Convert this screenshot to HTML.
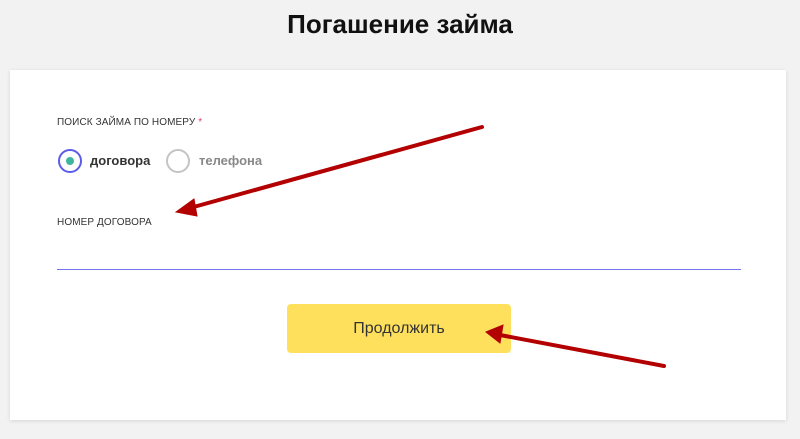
<!DOCTYPE html>
<html><head><meta charset="utf-8"><style>
body{margin:0;width:800px;height:439px;background:#f2f2f2;font-family:"Liberation Sans",sans-serif;position:relative;overflow:hidden}
h1{position:absolute;top:9px;left:0;width:800px;text-align:center;margin:0;font-size:26px;font-weight:bold;color:#111}
.card{position:absolute;left:10px;top:70px;width:776px;height:350px;background:#fff;box-shadow:0 1px 4px rgba(0,0,0,.12)}
.lbl{position:absolute;font-size:10px;color:#333;letter-spacing:.1px}
.r{position:absolute;width:24px;height:24px;border-radius:50%;box-sizing:border-box}
.t{position:absolute;font-size:13px;font-weight:bold}
.btn{position:absolute;left:277px;top:234px;width:224px;height:49px;background:#ffe05c;border-radius:4px;text-align:center;line-height:49px;font-size:16px;color:#333}
</style></head><body>
<h1>Погашение займа</h1>
<div class="card">
<div class="lbl" style="left:47px;top:47px">ПОИСК ЗАЙМА ПО НОМЕРУ <span style="color:#e5397a">*</span></div>
<div class="r" style="left:48px;top:79px;border:2px solid #5b5be8"><div style="position:absolute;left:6px;top:6px;width:8px;height:8px;border-radius:50%;background:#3fb59e"></div></div>
<div class="t" style="left:80px;top:83px;color:#333">договора</div>
<div class="r" style="left:156px;top:79px;border:2px solid #c4c4c4"></div>
<div class="t" style="left:189px;top:83px;color:#888">телефона</div>
<div class="lbl" style="left:47px;top:147px">НОМЕР ДОГОВОРА</div>
<div style="position:absolute;left:47px;top:199px;width:684px;height:1px;background:#7373f0"></div>
<div class="btn">Продолжить</div>
</div>
<svg width="800" height="439" style="position:absolute;left:0;top:0">
<g fill="#b30000" stroke="#b30000">
<line x1="482" y1="127" x2="190" y2="208" stroke-width="4" stroke-linecap="round"/>
<polygon points="176,212 194,199 197,216" stroke-width="1"/>
<line x1="664" y1="366" x2="500" y2="335" stroke-width="4" stroke-linecap="round"/>
<polygon points="486,332 503,325 500,343" stroke-width="1"/>
</g></svg>
</body></html>
